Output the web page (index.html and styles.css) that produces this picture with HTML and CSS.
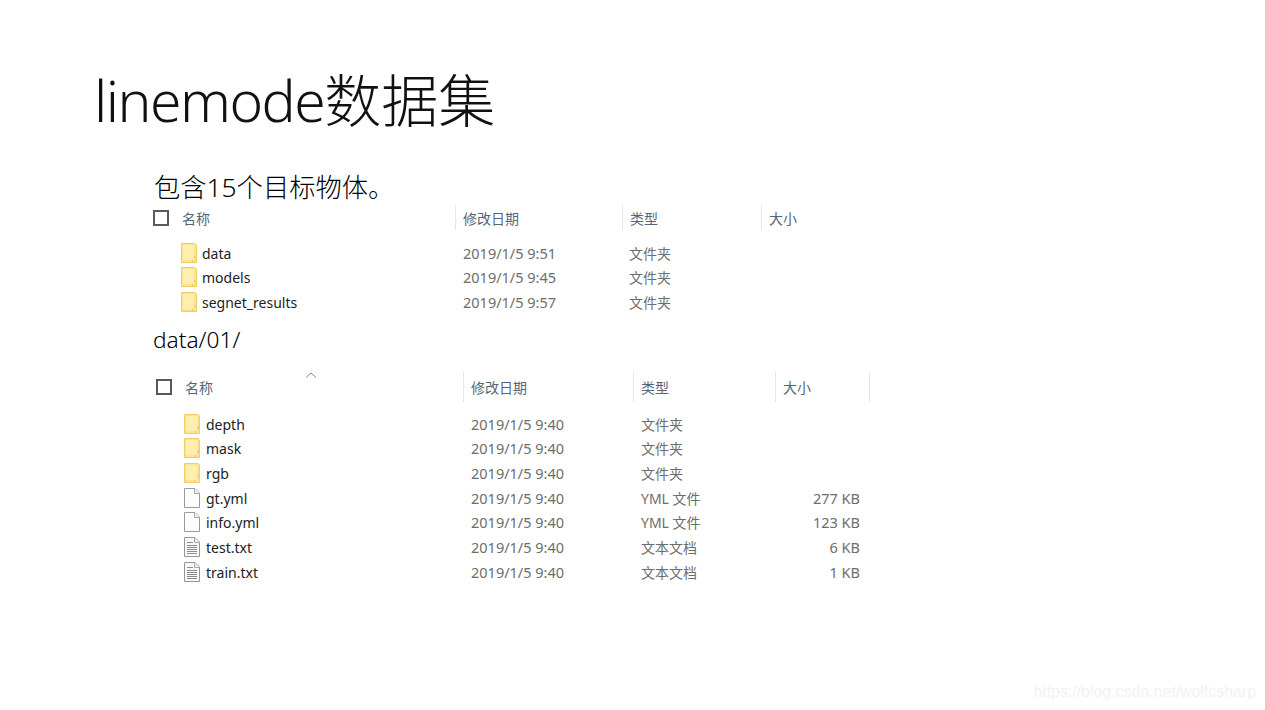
FILE: index.html
```html
<!DOCTYPE html>
<html lang="zh">
<head>
<meta charset="utf-8">
<title>linemode数据集</title>
<link rel="stylesheet" href="styles.css">
</head>
<body>
<svg class="defs" width="0" height="0" aria-hidden="true">
  <symbol id="folder" viewBox="0 0 16 20">
    <path d="M.5.5h13.500l1.500 1.500v17.500H.5z" fill="#fde58f" stroke="#f0cd6a"/>
    <path d="M11.500 19.500v-5h2.500v-2" fill="none" stroke="#ecc765"/>
    <path d="M2 2h11v15H2z" fill="#ffeeb0"/>
  </symbol>
  <symbol id="blank" viewBox="0 0 16 20">
    <path d="M.5.500h10.500l4.500 4.500v14.500H.5z" fill="#fff" stroke="#9a9a9a"/>
    <path d="M10.500.500v5h5" fill="#f2f2f2" stroke="#a8a8a8"/>
  </symbol>
  <symbol id="text" viewBox="0 0 16 20">
    <path d="M.5.500h10.500l4.500 4.500v14.500H.5z" fill="#f8f8f8" stroke="#969696"/>
    <path d="M10.500.500v5h5" fill="#eee" stroke="#a8a8a8"/>
    <path d="M3 5.500h6M3 8.500h10M3 10.500h10M3 12.500h10M3 14.500h10M3 16.500h10" stroke="#8c8c8c" fill="none"/>
  </symbol>
</svg>
<main class="slide">
  <h1 class="title"><span class="title-latin">linemode</span>数据集</h1>

  <p class="caption caption-first">包含15个目标物体。</p>
  <section class="list list-a">
    <div class="head">
      <span class="check"></span><span class="h-name">名称</span>
      <span class="h-col">修改日期</span><span class="h-col">类型</span><span class="h-col">大小</span>
    </div>
    <div class="rows">
      <div class="row"><svg class="ico"><use href="#folder"/></svg><span class="name">data</span><span class="cell">2019/1/5 9:51</span><span class="cell type">文件夹</span><span class="size"></span></div>
      <div class="row"><svg class="ico"><use href="#folder"/></svg><span class="name">models</span><span class="cell">2019/1/5 9:45</span><span class="cell type">文件夹</span><span class="size"></span></div>
      <div class="row"><svg class="ico"><use href="#folder"/></svg><span class="name">segnet_results</span><span class="cell">2019/1/5 9:57</span><span class="cell type">文件夹</span><span class="size"></span></div>
    </div>
  </section>

  <p class="caption caption-second">data/01/</p>
  <section class="list list-b">
    <div class="head">
      <span class="check"></span><span class="h-name">名称<svg class="sort" width="12" height="6" viewBox="0 0 12 6"><path d="M1 5.500l5-4.500 5 4.500" fill="none" stroke="#8a8a8a"/></svg></span>
      <span class="h-col">修改日期</span><span class="h-col">类型</span><span class="h-col">大小</span><span class="h-end"></span>
    </div>
    <div class="rows">
      <div class="row"><svg class="ico"><use href="#folder"/></svg><span class="name">depth</span><span class="cell">2019/1/5 9:40</span><span class="cell type">文件夹</span><span class="size"></span></div>
      <div class="row"><svg class="ico"><use href="#folder"/></svg><span class="name">mask</span><span class="cell">2019/1/5 9:40</span><span class="cell type">文件夹</span><span class="size"></span></div>
      <div class="row"><svg class="ico"><use href="#folder"/></svg><span class="name">rgb</span><span class="cell">2019/1/5 9:40</span><span class="cell type">文件夹</span><span class="size"></span></div>
      <div class="row"><svg class="ico"><use href="#blank"/></svg><span class="name">gt.yml</span><span class="cell">2019/1/5 9:40</span><span class="cell type">YML 文件</span><span class="size">277 KB</span></div>
      <div class="row"><svg class="ico"><use href="#blank"/></svg><span class="name">info.yml</span><span class="cell">2019/1/5 9:40</span><span class="cell type">YML 文件</span><span class="size">123 KB</span></div>
      <div class="row"><svg class="ico"><use href="#text"/></svg><span class="name">test.txt</span><span class="cell">2019/1/5 9:40</span><span class="cell type">文本文档</span><span class="size">6 KB</span></div>
      <div class="row"><svg class="ico"><use href="#text"/></svg><span class="name">train.txt</span><span class="cell">2019/1/5 9:40</span><span class="cell type">文本文档</span><span class="size">1 KB</span></div>
    </div>
  </section>
  <div class="watermark">https://blog.csdn.net/wolfcsharp</div>
</main>
</body>
</html>
```
FILE: styles.css
```css
* { box-sizing: border-box; }
html, body { margin: 0; padding: 0; background: #fff; }
.defs { position: absolute; }
.slide {
  position: relative;
  width: 1265px;
  height: 710px;
  overflow: hidden;
  padding-top: 62px;
  font-family: "Noto Sans", "Noto Sans CJK SC", sans-serif;
}
.title {
  margin: 0 0 0 94px;
  font-size: 57px;
  line-height: 76px;
  font-weight: 300;
  color: #111;
}
.title-latin { letter-spacing: -1.500px; }
.caption {
  margin: 0;
  font-weight: 300;
  color: #000;
}
.caption-first { margin: 32px 0 0 154px; line-height: 34px; font-size: 26.300px; }
.caption-second { margin: 9px 0 0 153px; line-height: 34px; font-size: 22.700px; }

.list { font-size: 14.500px; }
.list-a { --c1: 301px; --c2: 167px; --c3: 139px; --c4: 90px; margin: 0 0 0 153px; }
.list-b { --c1: 306px; --c2: 170px; --c3: 142px; --c4: 94px; margin: 15px 0 0 156px; }

.head, .row {
  display: grid;
  grid-template-columns: 29px calc(var(--c1) - 28px) var(--c2) var(--c3) var(--c4);
  align-items: center;
}
.list-b .head { grid-template-columns: 29px calc(var(--c1) - 28px) var(--c2) var(--c3) var(--c4) 1px; }
.head { height: 26px; padding-top: 1px; color: #566679; font-size: 14px; }
.list-b .head { height: 30px; padding-top: 0; }
.check {
  width: 16px;
  height: 16px;
  border: 2px solid #5a5a5a;
  background: #fff;
}
.h-name { position: relative; }
.sort { position: absolute; left: 120px; top: -5px; }
.h-col {
  align-self: stretch;
  display: flex;
  align-items: center;
  padding-left: 7px;
  border-left: 1px solid #e4e6e8;
}
.h-end { align-self: stretch; border-left: 1px solid #e4e6e8; }

.rows { padding-top: 10.500px; }
.list-b .rows { padding-top: 9.500px; }
.row { height: 24.500px; color: #6d6d6d; }
.list-b .row { height: 24.670px; }
.ico {
  grid-column: 1;
  width: 16px;
  height: 20px;
  margin-left: 28px;
}
.name {
  padding: 1px 0 0 20px;
  font-size: 14px;
  color: #222;
}
.list-b .name { padding-left: 21px; }
.cell { padding-left: 8px; }
.type { font-size: 14px; }
.list-a .type { padding-left: 7px; }
.size { text-align: right; padding-right: 9px; }
.watermark {
  position: absolute;
  right: 9px;
  bottom: 9px;
  font-family: "Liberation Sans", sans-serif;
  font-size: 15.900px;
  color: #f2f2f2;
}
```
